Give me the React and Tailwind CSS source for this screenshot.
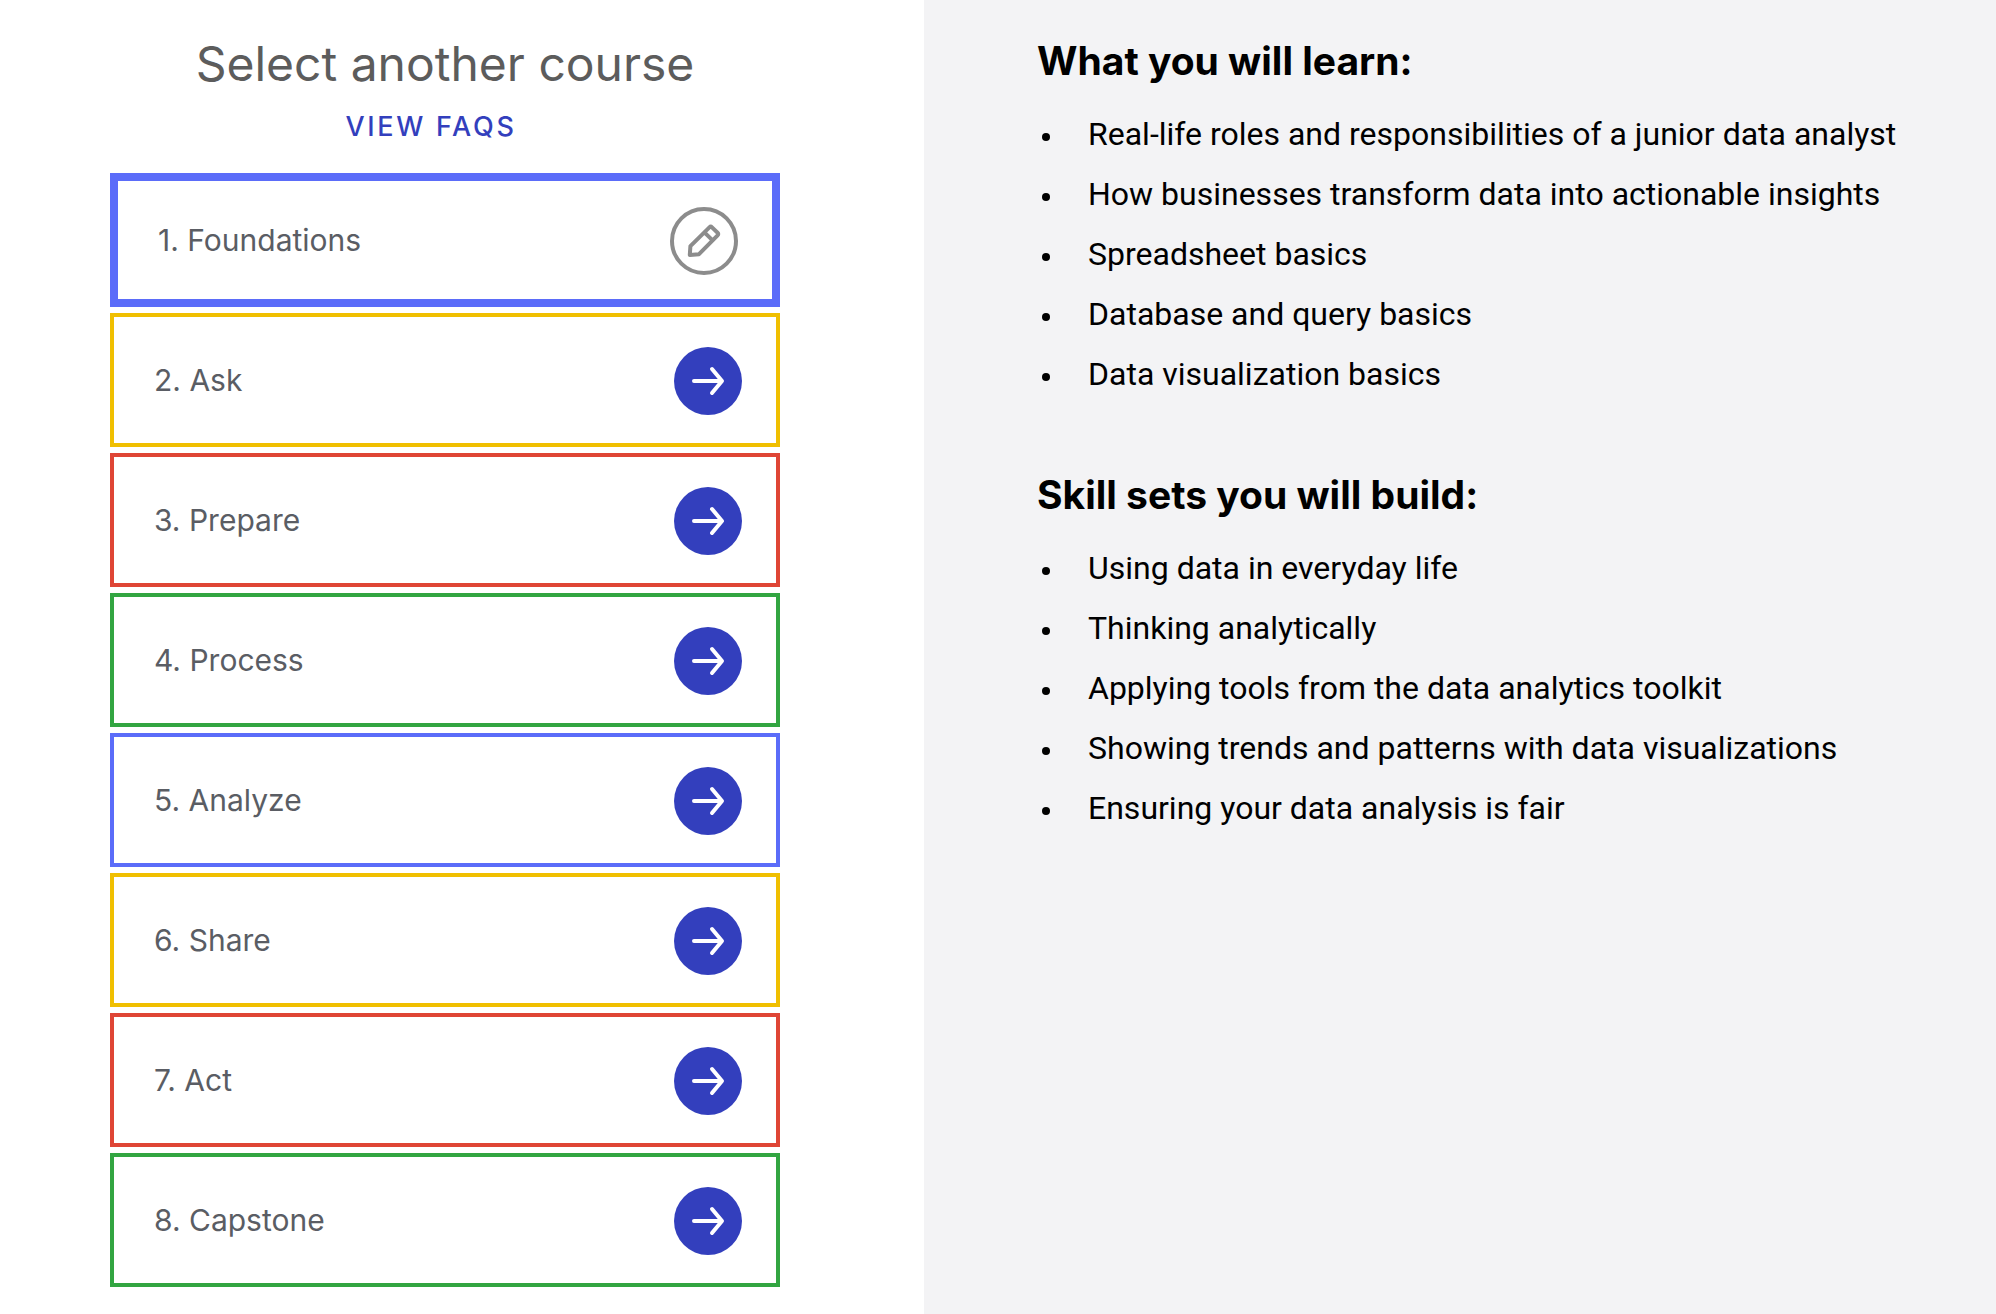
import React from 'react';

const courses = [
  { label: '1. Foundations', style: 'border-8 border-[#5b6cf9]', current: true },
  { label: '2. Ask', style: 'border-4 border-[#f0bf00]' },
  { label: '3. Prepare', style: 'border-4 border-[#df4535]' },
  { label: '4. Process', style: 'border-4 border-[#32a541]' },
  { label: '5. Analyze', style: 'border-4 border-[#5b6cf9]' },
  { label: '6. Share', style: 'border-4 border-[#f0bf00]' },
  { label: '7. Act', style: 'border-4 border-[#df4535]' },
  { label: '8. Capstone', style: 'border-4 border-[#32a541]' },
];

const learn = [
  'Real-life roles and responsibilities of a junior data analyst',
  'How businesses transform data into actionable insights',
  'Spreadsheet basics',
  'Database and query basics',
  'Data visualization basics',
];

const skills = [
  'Using data in everyday life',
  'Thinking analytically',
  'Applying tools from the data analytics toolkit',
  'Showing trends and patterns with data visualizations',
  'Ensuring your data analysis is fair',
];

function PencilIcon() {
  return (
    <svg viewBox="0 0 68 68" className="mt-0.5 size-[68px] shrink-0" fill="none" stroke="#8c8c8c" aria-hidden="true">
      <circle cx="34" cy="34" r="32" strokeWidth="4" />
      <path
        d="M19.8 48 L20.4 39.2 L39.4 20.3 Q40.7 19 42 20.3 L47.6 25.7 Q48.9 27 47.6 28.3 L29 47.2 Z M34.4 25.4 L42.6 33.4"
        strokeWidth="4"
        strokeLinejoin="round"
      />
    </svg>
  );
}

function ArrowIcon() {
  return (
    <svg viewBox="0 0 68 68" className="mt-0.5 size-[68px] shrink-0" fill="none" aria-hidden="true">
      <circle cx="34" cy="34" r="34" fill="#333fbd" />
      <path
        d="M20 34 H47.5 M38 22 L48 34 L38 46"
        stroke="#fff"
        strokeWidth="4"
        strokeLinecap="round"
        strokeLinejoin="round"
      />
    </svg>
  );
}

function CourseButton({ course }) {
  return (
    <li>
      <button
        type="button"
        aria-current={course.current ? 'true' : undefined}
        className={`flex h-[134px] w-full cursor-pointer items-center justify-between bg-white pl-10 pr-[34px] text-left text-[30px] leading-10 text-[#5a5d64] ${course.style}`}
      >
        <span>{course.label}</span>
        {course.current ? <PencilIcon /> : <ArrowIcon />}
      </button>
    </li>
  );
}

function BulletSection({ title, items }) {
  return (
    <section>
      <h2 className="text-[39px] font-bold leading-[48px]">{title}</h2>
      <ul className="mt-[29px] flex flex-col gap-5 pl-[5px] font-[Roboto,sans-serif]">
        {items.map((item) => (
          <li key={item} className="flex gap-[38px] text-[32px] leading-10">
            <span className="mt-[19px] size-2 shrink-0 rounded-full bg-black" />
            <span>{item}</span>
          </li>
        ))}
      </ul>
    </section>
  );
}

export default function App() {
  return (
    <main className="grid min-h-screen grid-cols-[924fr_1072fr] bg-white font-[Inter,sans-serif] text-black">
      <div className="flex flex-col pb-7 pl-[110px] pr-36 pt-[34px]">
        <h1 className="text-center text-[48px] leading-[60px] text-[#5c5c5c]">Select another course</h1>
        <div className="mt-[13px] flex justify-center pr-7">
          <a href="#faqs" className="text-[27px] font-medium leading-10 tracking-widest text-[#333fbd]">
            VIEW FAQS
          </a>
        </div>
        <ul className="mt-[26px] flex flex-col gap-1.5">
          {courses.map((course) => (
            <CourseButton key={course.label} course={course} />
          ))}
        </ul>
      </div>
      <div className="flex flex-col gap-[77px] bg-[#f3f3f5] pb-10 pl-[113px] pr-10 pt-[37px]">
        <BulletSection title="What you will learn:" items={learn} />
        <BulletSection title="Skill sets you will build:" items={skills} />
      </div>
    </main>
  );
}
